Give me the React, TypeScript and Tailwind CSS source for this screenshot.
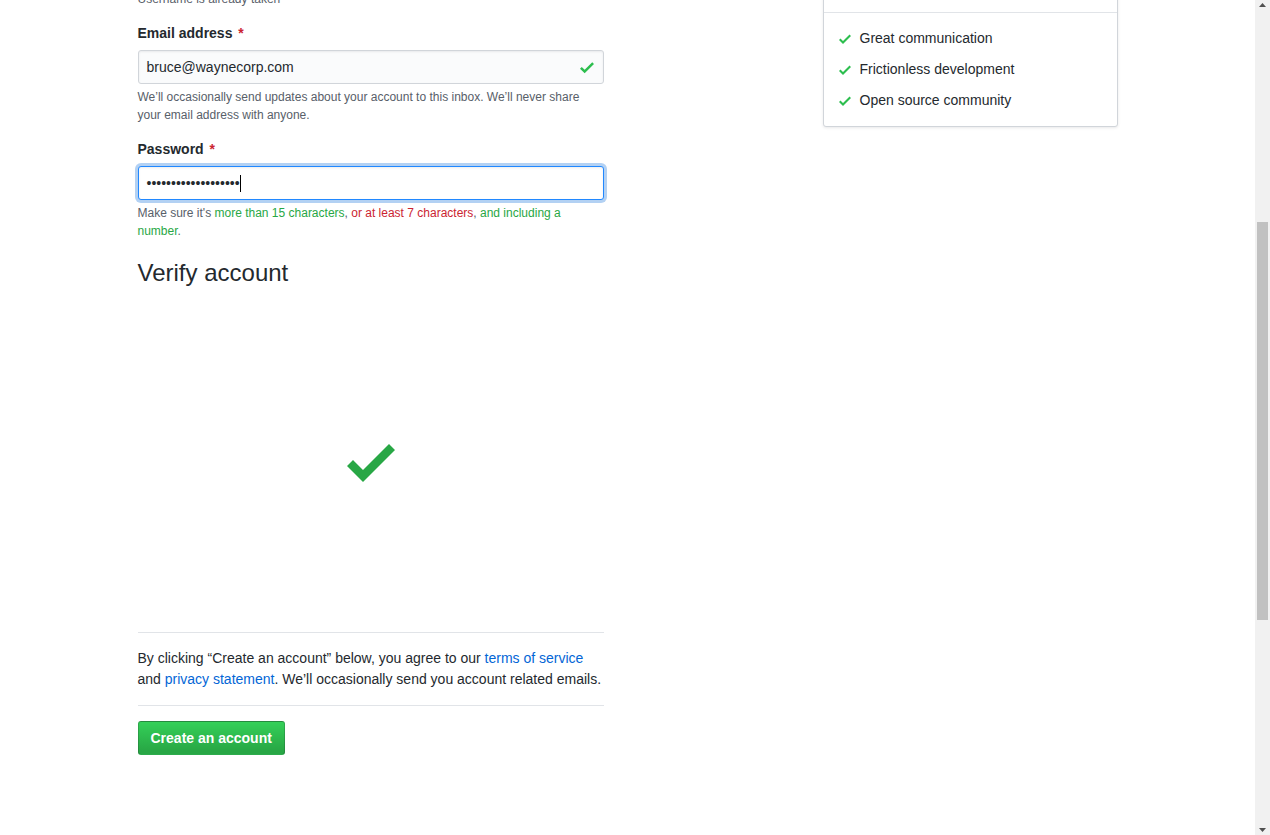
import type { ReactNode } from "react";

const CHECK = "M12 5l-8 8-4-4 1.5-1.5L4 10l6.5-6.5L12 5z";

function Check({ className }: { className?: string }) {
  return (
    <svg viewBox="0 0 12 16" className={className} fill="currentColor" aria-hidden>
      <path d={CHECK} />
    </svg>
  );
}

function Label({ children }: { children: ReactNode }) {
  return (
    <label className="block text-[14px] font-bold leading-[21px] text-[#24292e]">
      {children} <span className="ml-[2px] text-[#cb2431]">*</span>
    </label>
  );
}

const PERKS = ["Great communication", "Frictionless development", "Open source community"];

function Scrollbar() {
  return (
    <div className="flex h-full w-[15px] shrink-0 flex-col bg-[#f1f1f1]">
      <div className="flex h-[15px] items-center justify-center">
        <svg width="9" height="6" viewBox="0 0 9 6" className="-mt-[6px]">
          <polygon points="1,5 8,5 4.5,1" fill="#505050" />
        </svg>
      </div>
      <div className="flex-1">
        <div className="mx-[2px] mt-[207px] h-[398px] bg-[#c1c1c1]" />
      </div>
      <div className="flex h-[15px] items-center justify-center">
        <svg width="9" height="6" viewBox="0 0 9 6" className="mt-[4px]">
          <polygon points="1,1 8,1 4.5,5" fill="#505050" />
        </svg>
      </div>
    </div>
  );
}

export default function App() {
  return (
    <div className="flex h-[835px] w-full overflow-hidden bg-white font-['Liberation_Sans',Arial,sans-serif] text-[#24292e]">
      <div className="flex-1">
        <div className="mx-auto flex w-[980px] justify-between">
          {/* form column */}
          <div className="-mt-[10px] w-[466px]">
            <p className="text-[12px] leading-[18px] text-[#586069]">Username is already taken</p>

            <div className="mt-[15px]">
              <Label>Email address</Label>
              <div className="mt-[6px] flex h-[34px] items-center justify-between rounded-[3px] border border-[#d1d5da] bg-[#fafbfc] pl-[8px] pr-[9px] text-[14px] shadow-[inset_0_1px_2px_rgba(27,31,35,0.075)]">
                <span>bruce@waynecorp.com</span>
                <Check className="h-[19px] w-[14px] text-[#2cbe4e]" />
              </div>
              <p className="mt-[4px] text-[12px] leading-[18px] text-[#586069]">
                We’ll occasionally send updates about your account to this inbox. We’ll never share your email address
                with anyone.
              </p>
            </div>

            <div className="mt-[15px]">
              <Label>Password</Label>
              <div className="mt-[6px] flex h-[34px] items-center rounded-[3px] border border-[#2188ff] bg-white pl-[8px] text-[14px] shadow-[inset_0_1px_2px_rgba(27,31,35,0.075),0_0_0_3px_rgba(3,102,214,0.3)]">
                <span>•••••••••••••••••••</span>
                <span className="h-[17px] w-px bg-black" />
              </div>
              <p className="mt-[4px] text-[12px] leading-[18px] text-[#586069]">
                Make sure it's <span className="text-[#28a745]">more than 15 characters</span>,{" "}
                <span className="text-[#cb2431]">or at least 7 characters</span>,{" "}
                <span className="text-[#28a745]">and including a number</span>.
              </p>
            </div>

            <h2 className="mt-[18px] text-[24px] font-normal leading-[30px]">Verify account</h2>

            <div className="flex h-[344px] items-center justify-center pt-[3px]">
              <Check className="h-[64px] w-[48px] text-[#28a745]" />
            </div>

            <div className="border-t border-[#e1e4e8] py-[15px] text-[14px] leading-[21px]">
              By clicking “Create an account” below, you agree to our{" "}
              <a href="#" className="text-[#0366d6]">terms of service</a> and{" "}
              <a href="#" className="text-[#0366d6]">privacy statement</a>. We’ll occasionally send you account related
              emails.
            </div>

            <div className="border-t border-[#e1e4e8] pt-[15px]">
              <button className="h-[34px] rounded-[3px] border border-[rgba(27,31,35,0.2)] bg-[linear-gradient(-180deg,#34d058_0%,#28a745_90%)] px-[12px] text-[14px] font-bold text-white">
                Create an account
              </button>
            </div>
          </div>

          {/* perks card */}
          <div className="-mt-[49px] w-[295px]">
            <div className="rounded-[3px] border border-[#d1d5da] bg-white shadow-[0_1px_3px_rgba(27,31,35,0.1)]">
              <div className="h-[61px] border-b border-[#e1e4e8] px-[15px] pt-[14px] text-[16px] font-bold leading-[21px]">
                You’ll love GitHub
              </div>
              <ul className="flex flex-col gap-[10px] px-[15px] py-[15px] text-[14px] leading-[21px]">
                {PERKS.map((p) => (
                  <li key={p} className="flex items-center gap-[9px]">
                    <Check className="h-[16px] w-[12px] text-[#2cbe4e]" />
                    {p}
                  </li>
                ))}
              </ul>
            </div>
          </div>
        </div>
      </div>
      <Scrollbar />
    </div>
  );
}
